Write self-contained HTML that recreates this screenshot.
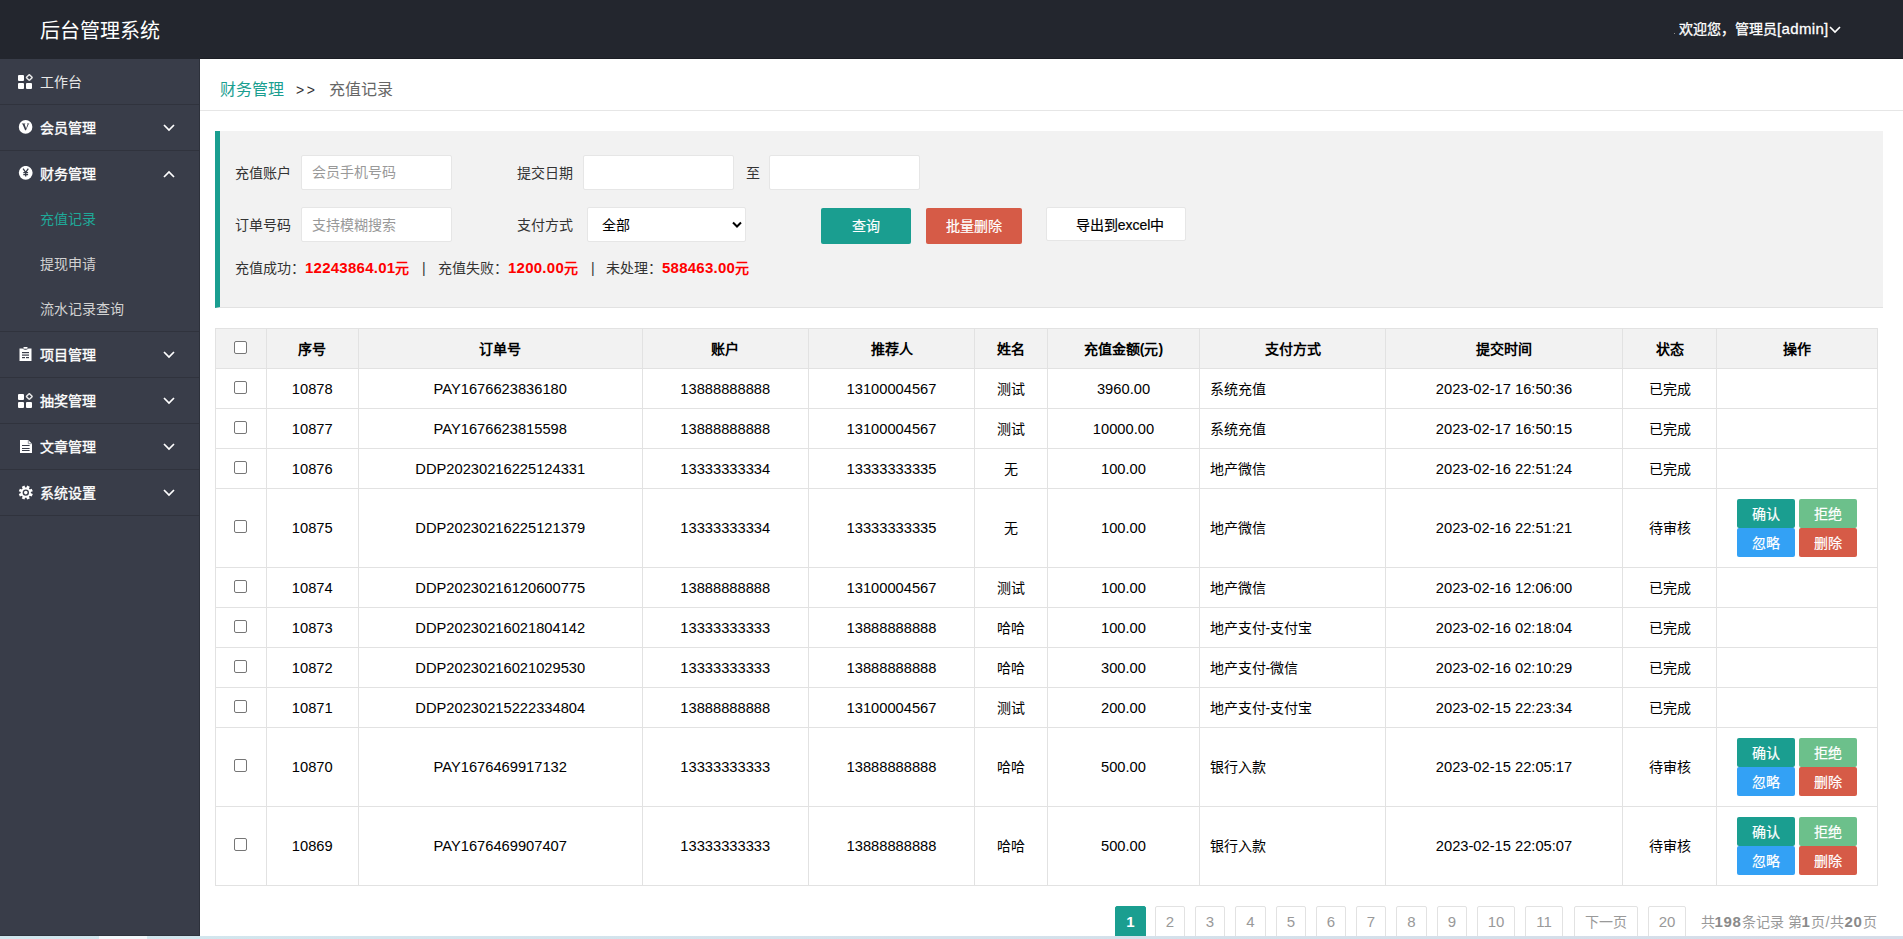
<!DOCTYPE html>
<html lang="zh-CN">
<head>
<meta charset="utf-8">
<title>后台管理系统</title>
<style>
*{margin:0;padding:0;box-sizing:border-box;}
html,body{width:1903px;height:939px;overflow:hidden;background:#fff;}
body{font-family:"Liberation Sans",sans-serif;font-size:14px;color:#333;position:relative;}
.hdr{position:absolute;left:0;top:0;width:1903px;height:59px;background:#23262E;}
.logo{position:absolute;left:40px;top:2px;height:59px;line-height:59px;font-size:20px;color:#fff;}
.user{position:absolute;left:1679px;top:0;height:59px;line-height:58px;font-size:14px;color:#fff;white-space:nowrap;-webkit-text-stroke:.3px #fff;}
.user svg{position:absolute;left:150px;top:26px;}
.side{position:absolute;left:0;top:59px;width:200px;height:877px;background:#393D49;border-right:1px solid #2d313b;border-bottom:1px solid #30343e;}
.hdrl{position:absolute;left:200px;top:58px;width:1703px;height:1px;background:#1b1d24;}
.nav{position:absolute;left:0;width:200px;height:45px;color:#fff;font-size:14px;}
.nav .t{position:absolute;left:40px;top:1px;line-height:45px;white-space:nowrap;}
.nav svg.ic{position:absolute;left:18px;top:15px;}
.nav svg.ch{position:absolute;left:163px;top:19px;}
.sep{position:absolute;left:0;width:199px;height:1px;background:#30333d;}
.sub{position:absolute;left:40px;width:159px;height:45px;line-height:47px;color:#d2d2d2;font-size:14px;white-space:nowrap;}
.bcb{position:absolute;left:200px;top:110px;width:1703px;height:1px;background:#e6e6e6;}
.bc{position:absolute;top:80px;line-height:20px;font-size:16px;white-space:nowrap;}
.quote{position:absolute;left:215px;top:131px;width:1668px;height:177px;background:#f2f2f2;border-left:5px solid #1a9e90;border-bottom:1px solid #e2e2e2;}
.lbl{position:absolute;font-size:14px;color:#333;line-height:20px;white-space:nowrap;}
.inp{position:absolute;background:#fff;border:1px solid #e6e6e6;border-radius:2px;font-size:14px;line-height:32px;padding-left:10px;color:#999;white-space:nowrap;}
.btn{position:absolute;color:#fff;font-size:14px;text-align:center;border-radius:2px;white-space:nowrap;-webkit-text-stroke:.2px currentColor;}
.sum{position:absolute;left:235px;top:258px;font-size:14px;color:#333;line-height:20px;white-space:nowrap;}
.sum span{position:absolute;top:0;}
.sum b{position:absolute;top:0;color:#f00;font-size:15px;letter-spacing:.25px;}
.hl{position:absolute;height:1px;background:#e2e2e2;}
.vl{position:absolute;width:1px;background:#e2e2e2;}
.cell{position:absolute;display:flex;align-items:center;justify-content:center;color:#000;font-size:14.7px;white-space:nowrap;}
.cell.zh{font-size:14px;padding-bottom:2px;}
.cell.th{padding-bottom:0;}
.cell .cb{margin-top:-2px;}
.cell .cb.t{margin-top:-3px;}
.cell.th{font-weight:bold;}
.cell.tl{justify-content:flex-start;padding-left:10px;}
.cb{display:inline-block;width:13px;height:13px;border:1px solid #767676;border-radius:2px;background:#fff;}
.ops{width:120px;height:58px;display:flex;flex-wrap:wrap;gap:0 4px;}
.ops i{display:block;width:58px;height:29px;line-height:31px;-webkit-text-stroke:.2px #fff;text-align:center;color:#fff;font-size:14px;font-style:normal;border-radius:2px;}
.pg{position:absolute;top:906px;height:32px;border:1px solid #e2e2e2;border-radius:2px;color:#999;text-align:center;line-height:30px;font-size:15px;background:#fff;white-space:nowrap;}
.pg.zh{font-size:14px;}
.pg.act{background:#1a9e90;border-color:#1a9e90;color:#fff;font-weight:bold;}
.pgt{position:absolute;top:912px;line-height:20px;font-size:14px;color:#999;white-space:nowrap;}
.pgt b{color:#8a8a8a;font-size:15px;letter-spacing:.7px;}
.pgt s{text-decoration:none;padding:0 1px;}
.strip{position:absolute;left:0;top:936px;width:1903px;height:3px;background:linear-gradient(90deg,#d2e7ee,#d6dde9);}
.strip i{position:absolute;left:99px;top:0;width:48px;height:3px;background:#f2f8fb;}
</style>
</head>
<body>
<div class="hdr">
  <div class="logo">后台管理系统</div>
  <div class="user"><span style="position:absolute;left:-5px;top:33px;width:1px;height:1px;background:#888"></span>欢迎您，管理员<span style="font-size:15px;letter-spacing:.35px">[admin]</span><svg width="12" height="8" viewBox="0 0 12 8"><polyline points="1,1 6,6 11,1" fill="none" stroke="#fff" stroke-width="1.7"/></svg></div>
</div>
<div class="side">
</div>
<div class="hdrl"></div>
<!-- sidebar items (page coords) -->
<div class="nav" style="top:59px"><svg class="ic" width="15" height="15" viewBox="0 0 15 15"><rect x="0" y="1" width="6" height="6" rx="1" fill="#fff"/><rect x="0" y="9" width="6" height="6" rx="1" fill="#fff"/><rect x="8" y="9" width="6" height="6" rx="1" fill="#fff"/><rect x="9.2" y="1.4" width="4.2" height="4.2" rx=".6" transform="rotate(45 11.3 3.5)" fill="none" stroke="#e8e8e8" stroke-width="1.5"/></svg><span class="t" style="font-weight:normal;color:#e8e8e8">工作台</span></div>
<div class="sep" style="top:104px"></div>
<div class="nav" style="top:105px"><svg class="ic" width="15" height="15" viewBox="0 0 15 15"><circle cx="7.6" cy="6.9" r="6.8" fill="#fff"/><path d="M3.9 3.5 L7.3 3.5 L7.3 4.1 L6.6 4.2 L8.1 8.4 L9.6 4.2 L9.1 4.1 L9.1 3.5 L11.2 3.5 L11.2 4.1 L10.6 4.2 L8 10.3 L7.1 10.3 L4.6 4.2 L3.9 4.1 Z" fill="#393D49"/></svg><span class="t" style="-webkit-text-stroke:.35px #fff">会员管理</span><svg class="ch" width="12" height="8" viewBox="0 0 12 8"><polyline points="1,1 6,6 11,1" fill="none" stroke="#fff" stroke-width="1.7"/></svg></div>
<div class="sep" style="top:150px"></div>
<div class="nav" style="top:151px"><svg class="ic" width="15" height="15" viewBox="0 0 15 15"><circle cx="7.7" cy="6.8" r="6.9" fill="#fff"/><path d="M5.1 2.7 L7.7 6.3 L10.3 2.7 M7.7 6.3 L7.7 10.6 M5.3 6.7 L10.1 6.7 M5.3 8.6 L10.1 8.6" fill="none" stroke="#393D49" stroke-width="1.3"/></svg><span class="t" style="-webkit-text-stroke:.35px #fff">财务管理</span><svg class="ch" width="12" height="8" viewBox="0 0 12 8"><polyline points="1,7 6,2 11,7" fill="none" stroke="#fff" stroke-width="1.7"/></svg></div>
<div class="sub" style="top:196px;color:#1fa898">充值记录</div>
<div class="sub" style="top:241px">提现申请</div>
<div class="sub" style="top:286px">流水记录查询</div>
<div class="sep" style="top:331px"></div>
<div class="nav" style="top:332px"><svg class="ic" width="15" height="15" viewBox="0 0 15 15"><path d="M1.5 1.5 L4.5 1.5 Q7.5 4 10.5 1.5 L13.5 1.5 L13.5 14 L1.5 14 Z" fill="#fff"/><rect x="5.3" y="0" width="4.4" height="1.8" rx=".9" fill="#fff"/><rect x="4" y="5" width="7" height="1.2" fill="#393D49"/><rect x="4" y="7.5" width="7" height="1.2" fill="#393D49"/><rect x="4" y="10" width="3" height="1.2" fill="#393D49"/><rect x="8" y="10" width="3" height="1.2" fill="#393D49"/></svg><span class="t" style="-webkit-text-stroke:.35px #fff">项目管理</span><svg class="ch" width="12" height="8" viewBox="0 0 12 8"><polyline points="1,1 6,6 11,1" fill="none" stroke="#fff" stroke-width="1.7"/></svg></div>
<div class="sep" style="top:377px"></div>
<div class="nav" style="top:378px"><svg class="ic" width="15" height="15" viewBox="0 0 15 15"><rect x="0" y="1" width="6" height="6" rx="1" fill="#fff"/><rect x="0" y="9" width="6" height="6" rx="1" fill="#fff"/><rect x="8" y="9" width="6" height="6" rx="1" fill="#fff"/><rect x="9.2" y="1.4" width="4.2" height="4.2" rx=".6" transform="rotate(45 11.3 3.5)" fill="none" stroke="#e8e8e8" stroke-width="1.5"/></svg><span class="t" style="-webkit-text-stroke:.35px #fff">抽奖管理</span><svg class="ch" width="12" height="8" viewBox="0 0 12 8"><polyline points="1,1 6,6 11,1" fill="none" stroke="#fff" stroke-width="1.7"/></svg></div>
<div class="sep" style="top:423px"></div>
<div class="nav" style="top:424px"><svg class="ic" width="15" height="15" viewBox="0 0 15 15"><path d="M2 1 L10.2 1 L14 4.8 L14 14 L2 14 Z" fill="#fff"/><path d="M10.3 1.2 L10.3 4.7 L13.8 4.7" fill="none" stroke="#8a8d96" stroke-width=".9"/><rect x="4" y="6" width="7.6" height="1" fill="#393D49"/><rect x="4" y="9" width="7.6" height="1" fill="#393D49"/><rect x="4" y="11" width="7.6" height="1" fill="#393D49"/></svg><span class="t" style="-webkit-text-stroke:.35px #fff">文章管理</span><svg class="ch" width="12" height="8" viewBox="0 0 12 8"><polyline points="1,1 6,6 11,1" fill="none" stroke="#fff" stroke-width="1.7"/></svg></div>
<div class="sep" style="top:469px"></div>
<div class="nav" style="top:470px"><svg class="ic" width="15" height="15" viewBox="0 0 15 15"><g fill="#fff" transform="rotate(22.5 7.8 7.6)"><circle cx="7.8" cy="7.6" r="5.1"/><rect x="6.4" y="0.6" width="2.8" height="3"/><rect x="6.4" y="11.6" width="2.8" height="3"/><rect x="0.8" y="6.2" width="3" height="2.8"/><rect x="11.8" y="6.2" width="3" height="2.8"/><g transform="rotate(45 7.8 7.6)"><rect x="6.4" y="0.6" width="2.8" height="3"/><rect x="6.4" y="11.6" width="2.8" height="3"/><rect x="0.8" y="6.2" width="3" height="2.8"/><rect x="11.8" y="6.2" width="3" height="2.8"/></g></g><circle cx="7.8" cy="7.6" r="2.5" fill="none" stroke="#393D49" stroke-width="1.4"/></svg><span class="t" style="-webkit-text-stroke:.35px #fff">系统设置</span><svg class="ch" width="12" height="8" viewBox="0 0 12 8"><polyline points="1,1 6,6 11,1" fill="none" stroke="#fff" stroke-width="1.7"/></svg></div>
<div class="sep" style="top:515px"></div>

<!-- breadcrumb -->
<div class="bc" style="left:220px;color:#1a9e90">财务管理</div>
<div class="bc" style="left:296px;color:#333;font-size:14px;letter-spacing:2.5px">&gt;&gt;</div>
<div class="bc" style="left:329px;color:#666">充值记录</div>
<div class="bcb"></div>

<!-- filter box -->
<div class="quote"></div>
<div class="lbl" style="left:235px;top:163px">充值账户</div>
<div class="inp" style="left:301px;top:155px;width:151px;height:35px">会员手机号码</div>
<div class="lbl" style="left:517px;top:163px">提交日期</div>
<div class="inp" style="left:583px;top:155px;width:151px;height:35px"></div>
<div class="lbl" style="left:746px;top:163px">至</div>
<div class="inp" style="left:769px;top:155px;width:151px;height:35px"></div>
<div class="lbl" style="left:235px;top:215px">订单号码</div>
<div class="inp" style="left:301px;top:207px;width:151px;height:35px;line-height:34px">支持模糊搜索</div>
<div class="lbl" style="left:517px;top:215px">支付方式</div>
<div class="inp" style="left:587px;top:207px;width:159px;height:35px;color:#000;padding-left:14px;line-height:34px">全部<svg style="position:absolute;left:144px;top:13px" width="10" height="8" viewBox="0 0 10 8"><polyline points="1,1.5 5,5.5 9,1.5" fill="none" stroke="#000" stroke-width="2"/></svg></div>
<div class="btn" style="left:821px;top:208px;width:90px;height:36px;line-height:36px;background:#1a9e90">查询</div>
<div class="btn" style="left:926px;top:208px;width:96px;height:36px;line-height:36px;background:#d65b47">批量删除</div>
<div class="btn" style="left:1046px;top:207px;width:140px;height:34px;line-height:32px;background:#fff;border:1px solid #e6e6e6;color:#000;padding-left:8px;line-height:34px">导出到excel中</div>
<div class="sum">
<span style="left:0">充值成功：</span><b style="left:70px">12243864.01<i style="font-style:normal;font-size:14px">元</i></b><span style="left:187px">|</span>
<span style="left:203px">充值失败：</span><b style="left:273px">1200.00<i style="font-style:normal;font-size:14px">元</i></b><span style="left:356px">|</span>
<span style="left:371px">未处理：</span><b style="left:427px">588463.00<i style="font-style:normal;font-size:14px">元</i></b>
</div>

<div class="tbl">
<div style="position:absolute;left:215px;top:328.5px;width:1662.5px;height:40px;background:#f2f2f2"></div>
<div class="hl" style="top:328.0px;left:214.5px;width:1663.5px"></div>
<div class="hl" style="top:368.0px;left:214.5px;width:1663.5px"></div>
<div class="hl" style="top:408.0px;left:214.5px;width:1663.5px"></div>
<div class="hl" style="top:448.0px;left:214.5px;width:1663.5px"></div>
<div class="hl" style="top:488.0px;left:214.5px;width:1663.5px"></div>
<div class="hl" style="top:567.0px;left:214.5px;width:1663.5px"></div>
<div class="hl" style="top:607.0px;left:214.5px;width:1663.5px"></div>
<div class="hl" style="top:647.0px;left:214.5px;width:1663.5px"></div>
<div class="hl" style="top:687.0px;left:214.5px;width:1663.5px"></div>
<div class="hl" style="top:727.0px;left:214.5px;width:1663.5px"></div>
<div class="hl" style="top:806.0px;left:214.5px;width:1663.5px"></div>
<div class="hl" style="top:885.0px;left:214.5px;width:1663.5px"></div>
<div class="vl" style="left:214.5px;top:328.0px;height:558.0px"></div>
<div class="vl" style="left:265.5px;top:328.0px;height:558.0px"></div>
<div class="vl" style="left:358.0px;top:328.0px;height:558.0px"></div>
<div class="vl" style="left:641.5px;top:328.0px;height:558.0px"></div>
<div class="vl" style="left:808.0px;top:328.0px;height:558.0px"></div>
<div class="vl" style="left:974.0px;top:328.0px;height:558.0px"></div>
<div class="vl" style="left:1047.0px;top:328.0px;height:558.0px"></div>
<div class="vl" style="left:1199.0px;top:328.0px;height:558.0px"></div>
<div class="vl" style="left:1385.0px;top:328.0px;height:558.0px"></div>
<div class="vl" style="left:1622.0px;top:328.0px;height:558.0px"></div>
<div class="vl" style="left:1716.0px;top:328.0px;height:558.0px"></div>
<div class="vl" style="left:1877.0px;top:328.0px;height:558.0px"></div>
<div class="cell" style="left:215px;width:51px;top:328.5px;height:40px"><span class="cb"></span></div>
<div class="cell th zh" style="left:266px;width:92.5px;top:327.5px;height:40px">序号</div>
<div class="cell th zh" style="left:358.5px;width:283.5px;top:327.5px;height:40px">订单号</div>
<div class="cell th zh" style="left:642px;width:166.5px;top:327.5px;height:40px">账户</div>
<div class="cell th zh" style="left:808.5px;width:166.0px;top:327.5px;height:40px">推荐人</div>
<div class="cell th zh" style="left:974.5px;width:73.0px;top:327.5px;height:40px">姓名</div>
<div class="cell th zh" style="left:1047.5px;width:152.0px;top:327.5px;height:40px">充值金额(元)</div>
<div class="cell th zh" style="left:1199.5px;width:186.0px;top:327.5px;height:40px">支付方式</div>
<div class="cell th zh" style="left:1385.5px;width:237.0px;top:327.5px;height:40px">提交时间</div>
<div class="cell th zh" style="left:1622.5px;width:94.0px;top:327.5px;height:40px">状态</div>
<div class="cell th zh" style="left:1716.5px;width:161.0px;top:327.5px;height:40px">操作</div>
<div class="cell" style="left:215px;width:51px;top:368.5px;height:40.0px"><span class="cb"></span></div>
<div class="cell" style="left:266px;width:92.5px;top:368.5px;height:40.0px">10878</div>
<div class="cell" style="left:358.5px;width:283.5px;top:368.5px;height:40.0px">PAY1676623836180</div>
<div class="cell" style="left:642px;width:166.5px;top:368.5px;height:40.0px">13888888888</div>
<div class="cell" style="left:808.5px;width:166.0px;top:368.5px;height:40.0px">13100004567</div>
<div class="cell zh" style="left:974.5px;width:73.0px;top:368.5px;height:40.0px">测试</div>
<div class="cell" style="left:1047.5px;width:152.0px;top:368.5px;height:40.0px">3960.00</div>
<div class="cell tl zh" style="left:1199.5px;width:186.0px;top:368.5px;height:40.0px">系统充值</div>
<div class="cell" style="left:1385.5px;width:237.0px;top:368.5px;height:40.0px">2023-02-17 16:50:36</div>
<div class="cell zh" style="left:1622.5px;width:94.0px;top:368.5px;height:40.0px">已完成</div>
<div class="cell" style="left:1716.5px;width:161.0px;top:368.5px;height:40.0px"></div>
<div class="cell" style="left:215px;width:51px;top:408.5px;height:40.0px"><span class="cb"></span></div>
<div class="cell" style="left:266px;width:92.5px;top:408.5px;height:40.0px">10877</div>
<div class="cell" style="left:358.5px;width:283.5px;top:408.5px;height:40.0px">PAY1676623815598</div>
<div class="cell" style="left:642px;width:166.5px;top:408.5px;height:40.0px">13888888888</div>
<div class="cell" style="left:808.5px;width:166.0px;top:408.5px;height:40.0px">13100004567</div>
<div class="cell zh" style="left:974.5px;width:73.0px;top:408.5px;height:40.0px">测试</div>
<div class="cell" style="left:1047.5px;width:152.0px;top:408.5px;height:40.0px">10000.00</div>
<div class="cell tl zh" style="left:1199.5px;width:186.0px;top:408.5px;height:40.0px">系统充值</div>
<div class="cell" style="left:1385.5px;width:237.0px;top:408.5px;height:40.0px">2023-02-17 16:50:15</div>
<div class="cell zh" style="left:1622.5px;width:94.0px;top:408.5px;height:40.0px">已完成</div>
<div class="cell" style="left:1716.5px;width:161.0px;top:408.5px;height:40.0px"></div>
<div class="cell" style="left:215px;width:51px;top:448.5px;height:40.0px"><span class="cb"></span></div>
<div class="cell" style="left:266px;width:92.5px;top:448.5px;height:40.0px">10876</div>
<div class="cell" style="left:358.5px;width:283.5px;top:448.5px;height:40.0px">DDP20230216225124331</div>
<div class="cell" style="left:642px;width:166.5px;top:448.5px;height:40.0px">13333333334</div>
<div class="cell" style="left:808.5px;width:166.0px;top:448.5px;height:40.0px">13333333335</div>
<div class="cell zh" style="left:974.5px;width:73.0px;top:448.5px;height:40.0px">无</div>
<div class="cell" style="left:1047.5px;width:152.0px;top:448.5px;height:40.0px">100.00</div>
<div class="cell tl zh" style="left:1199.5px;width:186.0px;top:448.5px;height:40.0px">地产微信</div>
<div class="cell" style="left:1385.5px;width:237.0px;top:448.5px;height:40.0px">2023-02-16 22:51:24</div>
<div class="cell zh" style="left:1622.5px;width:94.0px;top:448.5px;height:40.0px">已完成</div>
<div class="cell" style="left:1716.5px;width:161.0px;top:448.5px;height:40.0px"></div>
<div class="cell" style="left:215px;width:51px;top:488.5px;height:79.0px"><span class="cb t"></span></div>
<div class="cell" style="left:266px;width:92.5px;top:488.5px;height:79.0px">10875</div>
<div class="cell" style="left:358.5px;width:283.5px;top:488.5px;height:79.0px">DDP20230216225121379</div>
<div class="cell" style="left:642px;width:166.5px;top:488.5px;height:79.0px">13333333334</div>
<div class="cell" style="left:808.5px;width:166.0px;top:488.5px;height:79.0px">13333333335</div>
<div class="cell zh" style="left:974.5px;width:73.0px;top:488.5px;height:79.0px">无</div>
<div class="cell" style="left:1047.5px;width:152.0px;top:488.5px;height:79.0px">100.00</div>
<div class="cell tl zh" style="left:1199.5px;width:186.0px;top:488.5px;height:79.0px">地产微信</div>
<div class="cell" style="left:1385.5px;width:237.0px;top:488.5px;height:79.0px">2023-02-16 22:51:21</div>
<div class="cell zh" style="left:1622.5px;width:94.0px;top:488.5px;height:79.0px">待审核</div>
<div class="cell" style="left:1716.5px;width:161.0px;top:488.5px;height:79.0px"><div class="ops"><i style="background:#1a9e90">确认</i><i style="background:#6cc08b">拒绝</i><i style="background:#33a1f5">忽略</i><i style="background:#d65b47">删除</i></div></div>
<div class="cell" style="left:215px;width:51px;top:567.5px;height:40.0px"><span class="cb"></span></div>
<div class="cell" style="left:266px;width:92.5px;top:567.5px;height:40.0px">10874</div>
<div class="cell" style="left:358.5px;width:283.5px;top:567.5px;height:40.0px">DDP20230216120600775</div>
<div class="cell" style="left:642px;width:166.5px;top:567.5px;height:40.0px">13888888888</div>
<div class="cell" style="left:808.5px;width:166.0px;top:567.5px;height:40.0px">13100004567</div>
<div class="cell zh" style="left:974.5px;width:73.0px;top:567.5px;height:40.0px">测试</div>
<div class="cell" style="left:1047.5px;width:152.0px;top:567.5px;height:40.0px">100.00</div>
<div class="cell tl zh" style="left:1199.5px;width:186.0px;top:567.5px;height:40.0px">地产微信</div>
<div class="cell" style="left:1385.5px;width:237.0px;top:567.5px;height:40.0px">2023-02-16 12:06:00</div>
<div class="cell zh" style="left:1622.5px;width:94.0px;top:567.5px;height:40.0px">已完成</div>
<div class="cell" style="left:1716.5px;width:161.0px;top:567.5px;height:40.0px"></div>
<div class="cell" style="left:215px;width:51px;top:607.5px;height:40.0px"><span class="cb"></span></div>
<div class="cell" style="left:266px;width:92.5px;top:607.5px;height:40.0px">10873</div>
<div class="cell" style="left:358.5px;width:283.5px;top:607.5px;height:40.0px">DDP20230216021804142</div>
<div class="cell" style="left:642px;width:166.5px;top:607.5px;height:40.0px">13333333333</div>
<div class="cell" style="left:808.5px;width:166.0px;top:607.5px;height:40.0px">13888888888</div>
<div class="cell zh" style="left:974.5px;width:73.0px;top:607.5px;height:40.0px">哈哈</div>
<div class="cell" style="left:1047.5px;width:152.0px;top:607.5px;height:40.0px">100.00</div>
<div class="cell tl zh" style="left:1199.5px;width:186.0px;top:607.5px;height:40.0px">地产支付-支付宝</div>
<div class="cell" style="left:1385.5px;width:237.0px;top:607.5px;height:40.0px">2023-02-16 02:18:04</div>
<div class="cell zh" style="left:1622.5px;width:94.0px;top:607.5px;height:40.0px">已完成</div>
<div class="cell" style="left:1716.5px;width:161.0px;top:607.5px;height:40.0px"></div>
<div class="cell" style="left:215px;width:51px;top:647.5px;height:40.0px"><span class="cb"></span></div>
<div class="cell" style="left:266px;width:92.5px;top:647.5px;height:40.0px">10872</div>
<div class="cell" style="left:358.5px;width:283.5px;top:647.5px;height:40.0px">DDP20230216021029530</div>
<div class="cell" style="left:642px;width:166.5px;top:647.5px;height:40.0px">13333333333</div>
<div class="cell" style="left:808.5px;width:166.0px;top:647.5px;height:40.0px">13888888888</div>
<div class="cell zh" style="left:974.5px;width:73.0px;top:647.5px;height:40.0px">哈哈</div>
<div class="cell" style="left:1047.5px;width:152.0px;top:647.5px;height:40.0px">300.00</div>
<div class="cell tl zh" style="left:1199.5px;width:186.0px;top:647.5px;height:40.0px">地产支付-微信</div>
<div class="cell" style="left:1385.5px;width:237.0px;top:647.5px;height:40.0px">2023-02-16 02:10:29</div>
<div class="cell zh" style="left:1622.5px;width:94.0px;top:647.5px;height:40.0px">已完成</div>
<div class="cell" style="left:1716.5px;width:161.0px;top:647.5px;height:40.0px"></div>
<div class="cell" style="left:215px;width:51px;top:687.5px;height:40.0px"><span class="cb"></span></div>
<div class="cell" style="left:266px;width:92.5px;top:687.5px;height:40.0px">10871</div>
<div class="cell" style="left:358.5px;width:283.5px;top:687.5px;height:40.0px">DDP20230215222334804</div>
<div class="cell" style="left:642px;width:166.5px;top:687.5px;height:40.0px">13888888888</div>
<div class="cell" style="left:808.5px;width:166.0px;top:687.5px;height:40.0px">13100004567</div>
<div class="cell zh" style="left:974.5px;width:73.0px;top:687.5px;height:40.0px">测试</div>
<div class="cell" style="left:1047.5px;width:152.0px;top:687.5px;height:40.0px">200.00</div>
<div class="cell tl zh" style="left:1199.5px;width:186.0px;top:687.5px;height:40.0px">地产支付-支付宝</div>
<div class="cell" style="left:1385.5px;width:237.0px;top:687.5px;height:40.0px">2023-02-15 22:23:34</div>
<div class="cell zh" style="left:1622.5px;width:94.0px;top:687.5px;height:40.0px">已完成</div>
<div class="cell" style="left:1716.5px;width:161.0px;top:687.5px;height:40.0px"></div>
<div class="cell" style="left:215px;width:51px;top:727.5px;height:79.0px"><span class="cb t"></span></div>
<div class="cell" style="left:266px;width:92.5px;top:727.5px;height:79.0px">10870</div>
<div class="cell" style="left:358.5px;width:283.5px;top:727.5px;height:79.0px">PAY1676469917132</div>
<div class="cell" style="left:642px;width:166.5px;top:727.5px;height:79.0px">13333333333</div>
<div class="cell" style="left:808.5px;width:166.0px;top:727.5px;height:79.0px">13888888888</div>
<div class="cell zh" style="left:974.5px;width:73.0px;top:727.5px;height:79.0px">哈哈</div>
<div class="cell" style="left:1047.5px;width:152.0px;top:727.5px;height:79.0px">500.00</div>
<div class="cell tl zh" style="left:1199.5px;width:186.0px;top:727.5px;height:79.0px">银行入款</div>
<div class="cell" style="left:1385.5px;width:237.0px;top:727.5px;height:79.0px">2023-02-15 22:05:17</div>
<div class="cell zh" style="left:1622.5px;width:94.0px;top:727.5px;height:79.0px">待审核</div>
<div class="cell" style="left:1716.5px;width:161.0px;top:727.5px;height:79.0px"><div class="ops"><i style="background:#1a9e90">确认</i><i style="background:#6cc08b">拒绝</i><i style="background:#33a1f5">忽略</i><i style="background:#d65b47">删除</i></div></div>
<div class="cell" style="left:215px;width:51px;top:806.5px;height:79.0px"><span class="cb t"></span></div>
<div class="cell" style="left:266px;width:92.5px;top:806.5px;height:79.0px">10869</div>
<div class="cell" style="left:358.5px;width:283.5px;top:806.5px;height:79.0px">PAY1676469907407</div>
<div class="cell" style="left:642px;width:166.5px;top:806.5px;height:79.0px">13333333333</div>
<div class="cell" style="left:808.5px;width:166.0px;top:806.5px;height:79.0px">13888888888</div>
<div class="cell zh" style="left:974.5px;width:73.0px;top:806.5px;height:79.0px">哈哈</div>
<div class="cell" style="left:1047.5px;width:152.0px;top:806.5px;height:79.0px">500.00</div>
<div class="cell tl zh" style="left:1199.5px;width:186.0px;top:806.5px;height:79.0px">银行入款</div>
<div class="cell" style="left:1385.5px;width:237.0px;top:806.5px;height:79.0px">2023-02-15 22:05:07</div>
<div class="cell zh" style="left:1622.5px;width:94.0px;top:806.5px;height:79.0px">待审核</div>
<div class="cell" style="left:1716.5px;width:161.0px;top:806.5px;height:79.0px"><div class="ops"><i style="background:#1a9e90">确认</i><i style="background:#6cc08b">拒绝</i><i style="background:#33a1f5">忽略</i><i style="background:#d65b47">删除</i></div></div>
</div>

<div class="pg act" style="left:1115px;width:31px">1</div>
<div class="pg" style="left:1155px;width:30px">2</div>
<div class="pg" style="left:1195px;width:30px">3</div>
<div class="pg" style="left:1235px;width:31px">4</div>
<div class="pg" style="left:1276px;width:30px">5</div>
<div class="pg" style="left:1316px;width:30px">6</div>
<div class="pg" style="left:1356px;width:30px">7</div>
<div class="pg" style="left:1396px;width:31px">8</div>
<div class="pg" style="left:1437px;width:30px">9</div>
<div class="pg" style="left:1477px;width:38px">10</div>
<div class="pg" style="left:1525px;width:38px">11</div>
<div class="pg zh" style="left:1574px;width:64px">下一页</div>
<div class="pg" style="left:1648px;width:38px">20</div>
<div class="pgt" style="left:1700.5px">共<b>198</b>条记录 第<b>1</b>页<s>/</s>共<b>20</b>页</div>

<div class="strip"><i></i></div>
</body>
</html>
